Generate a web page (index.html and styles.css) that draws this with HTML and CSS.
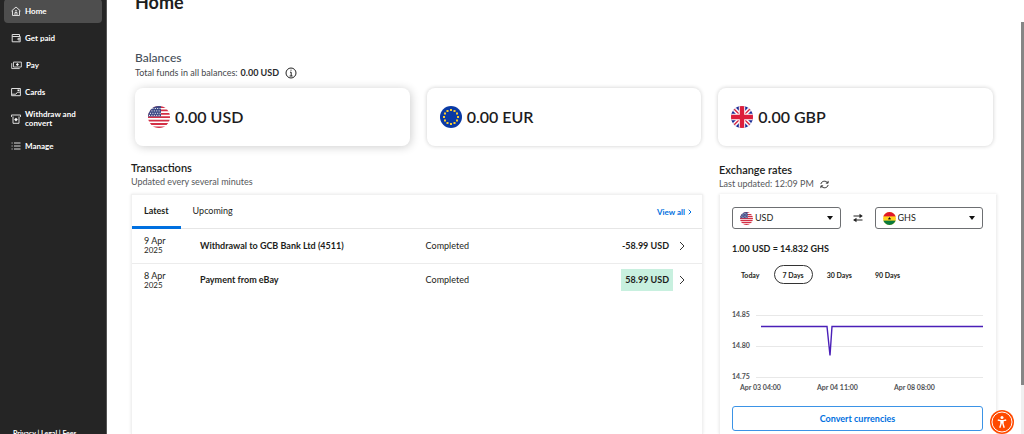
FILE: index.html
```html
<!DOCTYPE html>
<html lang="en">

<head>
	<meta charset="UTF-8">
	<meta name="viewport" content="width=device-width, initial-scale=1.0">
	<title>Home</title>
	<link rel="stylesheet" href="styles.css">
</head>

<body>
	<!-- shared flag drawings -->
	<svg class="defs" width="0" height="0" aria-hidden="true">
		<defs>
			<clipPath id="round"><circle cx="11" cy="11" r="11"/></clipPath>
			<symbol id="flag-us" viewBox="0 0 22 22">
				<g clip-path="url(#round)">
					<rect width="22" height="22" fill="#fff"/>
					<path d="M0 1h22M0 4.4h22M0 7.8h22M0 11.2h22M0 14.6h22M0 18h22M0 21.4h22" stroke="#d32f45" stroke-width="1.8"/>
					<rect width="13" height="10.5" fill="#3d4a86"/>
					<path d="M2 2.5h11M1 4.9h12M2 7.3h11M1 9.4h12" stroke="#fff" stroke-width="1" stroke-dasharray="1 1.4"/>
				</g>
			</symbol>
			<symbol id="flag-eu" viewBox="0 0 22 22">
				<circle cx="11" cy="11" r="11" fill="#0a3aa5"/>
				<g fill="#f7cc2e">
					<rect x="10" y="3" width="2" height="2"/><rect x="13.5" y="4" width="2" height="2"/>
					<rect x="16" y="6.5" width="2" height="2"/><rect x="17" y="10" width="2" height="2"/>
					<rect x="16" y="13.5" width="2" height="2"/><rect x="13.5" y="16" width="2" height="2"/>
					<rect x="10" y="17" width="2" height="2"/><rect x="6.5" y="16" width="2" height="2"/>
					<rect x="4" y="13.5" width="2" height="2"/><rect x="3" y="10" width="2" height="2"/>
					<rect x="4" y="6.5" width="2" height="2"/><rect x="6.5" y="4" width="2" height="2"/>
				</g>
			</symbol>
			<symbol id="flag-gb" viewBox="0 0 22 22">
				<g clip-path="url(#round)">
					<rect width="22" height="22" fill="#1a2a94"/>
					<path d="M0 0l22 22M22 0L0 22" stroke="#fff" stroke-width="4.4"/>
					<path d="M0 0l22 22M22 0L0 22" stroke="#d8203c" stroke-width="1.4"/>
					<path d="M11 0v22M0 11h22" stroke="#fff" stroke-width="6.4"/>
					<path d="M11 0v22M0 11h22" stroke="#dc1f3c" stroke-width="4.4"/>
				</g>
			</symbol>
			<symbol id="flag-gh" viewBox="0 0 22 22">
				<g clip-path="url(#round)">
					<rect width="22" height="22" fill="#ffd21f"/>
					<rect width="22" height="7.4" fill="#e0162b"/>
					<rect y="14.6" width="22" height="7.4" fill="#0a7a3c"/>
					<path d="M11 8.200l.8 1.900h2l-1.600 1.300.6 2.100-1.800-1.200-1.800 1.200.6-2.100-1.600-1.300h2z" fill="#111"/>
				</g>
			</symbol>
		</defs>
	</svg>

	<div class="app">
		<aside class="sidebar">
			<nav class="menu">
				<a class="menu-item active" href="#">
					<svg class="icon" viewBox="0 0 10 10"><path d="M.5 5L5 1l4.500 4M1.500 4.500v5h7v-5M4 9.500V6.500h2v3M4 4.800h2"/></svg>
					<span>Home</span>
				</a>
				<a class="menu-item" href="#">
					<svg class="icon" viewBox="0 0 10 10"><path d="M8.500 3.500V1.500H1.200v7.300h8V3.500H1.200M9 5.300H7v1.600h2"/></svg>
					<span>Get paid</span>
				</a>
				<a class="menu-item" href="#">
					<svg class="icon wide" viewBox="0 0 12 10"><path d="M2.700 1.800h8.600v5.400H2.700zM.8 3v5.900h8.700"/><path class="solid" d="M7 2.800L8.700 4.500 7 6.200 5.300 4.500z"/></svg>
					<span>Pay</span>
				</a>
				<a class="menu-item" href="#">
					<svg class="icon" viewBox="0 0 10 10"><path d="M.6 1.500h8.800v7.200H.6zM.8 7.200h4l1.700-2h2.900"/><path class="solid" d="M6.500 2.500h2v1.500h-2z"/></svg>
					<span>Cards</span>
				</a>
				<a class="menu-item" href="#">
					<svg class="icon" viewBox="0 0 10 10"><path d="M.4 3V1h9.200v2M2 2.500v6.800h6V2.500"/><path class="solid" d="M5 3.800L6.800 5.600 5 7.400 3.200 5.600z"/></svg>
					<span>Withdraw and convert</span>
				</a>
				<a class="menu-item" href="#">
					<svg class="icon" viewBox="0 0 10 10"><path d="M.6 2h1M3 2h6.500M.6 5h1M3 5h6.500M.6 8h1M3 8h6.500"/></svg>
					<span>Manage</span>
				</a>
			</nav>
			<div class="legal"><a href="#">Privacy</a> | <a href="#">Legal</a> | <a href="#">Fees</a></div>
		</aside>

		<main class="content">
			<h1 class="page-title">Home</h1>

			<section class="balances">
				<h2 class="balances-title">Balances</h2>
				<p class="total">Total funds in all balances: <b>0.00 USD</b>
					<svg class="info" viewBox="0 0 12 12"><circle cx="6" cy="6" r="5"/><path d="M5 5.200h1.200V9M4.600 9h3M5.500 3.200h1"/></svg>
				</p>
				<div class="cards">
					<div class="card selected"><svg class="flag"><use href="#flag-us"/></svg>0.00 USD</div>
					<div class="card"><svg class="flag"><use href="#flag-eu"/></svg>0.00 EUR</div>
					<div class="card"><svg class="flag"><use href="#flag-gb"/></svg>0.00 GBP</div>
				</div>
			</section>

			<div class="columns">
				<section class="transactions">
					<h2 class="section-title">Transactions</h2>
					<p class="note">Updated every several minutes</p>
					<div class="panel">
						<div class="tabs">
							<button class="tab current" type="button">Latest</button>
							<button class="tab" type="button">Upcoming</button>
							<a class="view-all" href="#">View all <svg viewBox="0 0 4 6"><path d="M.7.7L3 3 .7 5.300"/></svg></a>
						</div>
						<table class="list">
							<tr>
								<td class="date">9 Apr<small>2025</small></td>
								<td class="desc">Withdrawal to GCB Bank Ltd (4511)</td>
								<td class="status">Completed</td>
								<td class="amount"><span>-58.99 USD</span></td>
								<td class="more"><svg viewBox="0 0 6 10"><path d="M1 1l4 4-4 4"/></svg></td>
							</tr>
							<tr>
								<td class="date">8 Apr<small>2025</small></td>
								<td class="desc">Payment from eBay</td>
								<td class="status">Completed</td>
								<td class="amount"><span class="income">58.99 USD</span></td>
								<td class="more"><svg viewBox="0 0 6 10"><path d="M1 1l4 4-4 4"/></svg></td>
							</tr>
						</table>
					</div>
				</section>

				<section class="rates">
					<h2 class="section-title">Exchange rates</h2>
					<p class="note">Last updated: 12:09 PM
						<svg class="refresh" viewBox="0 0 10 10"><path d="M1 4.500C1.500 1 6.500.2 8.500 3.200M9 1v2.500H6.500M9 5.500C8.500 9 3.500 9.800 1.500 6.800M1 9V6.500h2.500"/></svg>
					</p>
					<div class="panel rates-panel">
						<div class="pair">
							<label class="currency">
								<svg class="flag"><use href="#flag-us"/></svg>
								<select aria-label="From"><option>USD</option></select>
								<svg class="caret" viewBox="0 0 6 4"><path d="M0 0h6L3 4z"/></svg>
							</label>
							<svg class="swap" viewBox="0 0 10 10"><path d="M.5 3h7.500M.8 7H9.500"/><path class="solid" d="M6.500.7L9.800 3 6.500 5.300zM3.500 4.700L.2 7l3.300 2.300z"/></svg>
							<label class="currency">
								<svg class="flag"><use href="#flag-gh"/></svg>
								<select aria-label="To"><option>GHS</option></select>
								<svg class="caret" viewBox="0 0 6 4"><path d="M0 0h6L3 4z"/></svg>
							</label>
						</div>
						<p class="rate">1.00 USD = 14.832 GHS</p>
						<div class="periods">
							<button class="period" type="button">Today</button>
							<button class="period chosen" type="button">7 Days</button>
							<button class="period" type="button">30 Days</button>
							<button class="period" type="button">90 Days</button>
						</div>
						<svg class="chart" viewBox="0 0 251 84">
							<path class="grid" d="M24 5.500h227M24 36.500h227M24 67.500h227"/>
							<path class="line" d="M29 16.500h66l3 29 2-29h151"/>
							<text x="0" y="7">14.85</text>
							<text x="0" y="38">14.80</text>
							<text x="0" y="69">14.75</text>
							<text x="8" y="80">Apr 03 04:00</text>
							<text x="85" y="80">Apr 04 11:00</text>
							<text x="162" y="80">Apr 08 08:00</text>
						</svg>
						<button class="convert" type="button">Convert currencies</button>
					</div>
				</section>
			</div>
		</main>
	</div>

	<button class="access" type="button" aria-label="Accessibility">
		<svg viewBox="0 0 24 24"><circle class="ring" cx="12" cy="12" r="10"/><circle class="head" cx="12" cy="7.400" r="1.500"/><path d="M7.800 10l2.700.6h3l2.700-.6M12 10.500v3M11 10.700v3.300l-1.200 3.800M13 10.700v3.300l1.200 3.800"/></svg>
	</button>
	<div class="scroll"><div class="thumb"></div></div>
</body>

</html>
```
FILE: styles.css
```css
* {
	box-sizing: border-box;
}

body {
	margin: 0;
	height: 100vh;
	overflow: hidden;
	font-family: Lato, "Open Sans", sans-serif;
	font-size: 9px;
	line-height: 12px;
	color: #1d1e20;
	background: #fff;
}

h1,
h2,
p {
	margin: 0;
}

a {
	color: inherit;
	text-decoration: none;
}

button,
select {
	font: inherit;
	color: inherit;
	background: none;
	border: 0;
	padding: 0;
	cursor: pointer;
}

svg {
	display: block;
	flex: none;
}

.defs {
	position: absolute;
}

.app {
	display: flex;
	height: 100vh;
}

/* sidebar */
.sidebar {
	display: flex;
	flex-direction: column;
	justify-content: space-between;
	flex: none;
	width: 107px;
	padding: 0 4px;
	background: #252525;
	border-right: 1px solid #555;
	color: #fff;
	font-weight: 700;
}

.menu {
	display: flex;
	flex-direction: column;
	gap: 3px;
	margin-top: -1px;
}

.menu-item {
	display: flex;
	align-items: center;
	gap: 4px;
	height: 24px;
	padding: 0 7px;
	border-radius: 4px;
	font-size: 8px;
	line-height: 9px;
}

.menu-item.active {
	background: #4e4e4e;
}

.icon {
	width: 10px;
	height: 10px;
	fill: none;
	stroke: #ddd;
	stroke-width: 1;
}

.icon.wide {
	width: 11px;
}

.solid {
	fill: #fff;
	stroke: none;
}

.legal {
	margin-bottom: -3px;
	padding-left: 9px;
	font-size: 7px;
	line-height: 8px;
}

/* content */
.content {
	display: flex;
	flex-direction: column;
	flex: 1;
	min-width: 0;
	height: 100vh;
	padding: 0 27px 0 24px;
	overflow: hidden;
}

.page-title {
	flex: none;
	margin-top: -10px;
	padding-left: 4px;
	font-size: 18px;
	line-height: 24px;
}

.balances {
	padding: 37px 4px 0;
}

.balances-title {
	font-size: 12px;
	line-height: 14px;
	font-weight: 500;
	color: #454e59;
}

.total {
	display: flex;
	align-items: center;
	gap: 3px;
	height: 16px;
	color: #45474a;
}

.total b {
	color: #2a2b2d;
}

.info {
	width: 12px;
	height: 12px;
	margin-left: 3px;
	fill: none;
	stroke: #222;
}

.cards {
	display: grid;
	grid-template-columns: repeat(3, 1fr);
	gap: 17px;
	margin-top: 7px;
}

.card {
	display: flex;
	align-items: center;
	gap: 5px;
	height: 58px;
	padding: 0 13px;
	border-radius: 8px;
	box-shadow: 0 0 4px rgba(0, 0, 0, 0.2);
	font-size: 16px;
	line-height: 22px;
	font-weight: 600;
	color: #1c1c1e;
}

.card.selected {
	box-shadow: 1px 1px 10px rgba(0, 0, 0, 0.2);
}

.flag {
	width: 22px;
	height: 22px;
}

.columns {
	display: grid;
	grid-template-columns: 572fr 278fr;
	gap: 16px;
	flex: 1;
	padding-top: 15px;
}

.transactions,
.rates {
	display: flex;
	flex-direction: column;
}

.rates {
	padding-top: 2px;
}

.section-title {
	font-size: 11px;
	line-height: 14px;
	font-weight: 600;
}

.note {
	display: flex;
	align-items: center;
	gap: 6px;
	height: 14px;
	color: #56585b;
}

.refresh {
	width: 9px;
	height: 9px;
	fill: none;
	stroke: #222;
}

.panel {
	flex: 1;
	margin-top: 5px;
	border: 1px solid #f1f1f1;
	border-bottom: 0;
	box-shadow: 0 0 3px rgba(0, 0, 0, 0.1);
}

/* transactions */
.tabs {
	display: flex;
	height: 34px;
	border-bottom: 1px solid #e6e6e6;
}

.tab {
	height: 34px;
	padding: 0 12px;
	border-bottom: 3px solid transparent;
}

.tab.current {
	border-color: #0070e0;
	font-weight: 700;
}

.view-all {
	display: flex;
	align-items: center;
	gap: 3px;
	margin-left: auto;
	padding-right: 10px;
	font-size: 8px;
	font-weight: 700;
	color: #0070e0;
}

.view-all svg {
	width: 4px;
	height: 6px;
	fill: none;
	stroke: #0070e0;
}

.list {
	width: 100%;
	table-layout: fixed;
	border-collapse: collapse;
}

.list tr {
	height: 34px;
}

.list tr + tr {
	border-top: 1px solid #ececec;
}

.list td {
	padding: 0;
}

.list .date {
	width: 68px;
	padding-left: 12px;
	line-height: 10px;
}

.date small {
	display: block;
	font-size: 8px;
	line-height: 9px;
}

.desc {
	font-weight: 700;
}

.status {
	width: 22%;
}

.amount {
	width: 122px;
	text-align: right;
	font-weight: 700;
}

.amount span {
	display: inline-block;
	padding: 5px 4px;
}

.amount .income {
	background: #c8f0df;
}

.more {
	width: 29px;
}

.more svg {
	width: 6px;
	height: 10px;
	margin-left: 6px;
	fill: none;
	stroke: #333;
}

/* exchange rates */
.rates-panel {
	margin-top: 3px;
	padding: 12px 13px 0 12px;
	border-top-color: transparent;
}

.pair {
	display: flex;
	align-items: center;
	justify-content: space-between;
	gap: 12px;
}

.currency {
	display: flex;
	align-items: center;
	flex: 1;
	gap: 2px;
	height: 22px;
	padding: 0 7px;
	border: 1px solid #6d6f72;
	border-radius: 3px;
}

.currency .flag {
	width: 13px;
	height: 13px;
}

.currency select {
	flex: 1;
	min-width: 0;
	appearance: none;
}

.caret {
	width: 6px;
	height: 4px;
	fill: #111;
}

.swap {
	width: 10px;
	height: 10px;
	fill: none;
	stroke: #222;
}

.swap .solid {
	fill: #222;
}

.rate {
	margin-top: 14px;
	font-weight: 700;
}

.periods {
	display: flex;
	gap: 5px;
	margin-top: 10px;
}

.period {
	height: 19px;
	padding: 0 8px;
	border: 1px solid transparent;
	border-radius: 10px;
	font-size: 7px;
	font-weight: 700;
}

.period.chosen {
	border-color: #333;
}

.chart {
	width: 100%;
	margin-top: 26px;
}

.chart text {
	font-size: 7px;
	font-weight: 700;
	fill: #505255;
}

.grid {
	stroke: #e8e8e8;
}

.line {
	fill: none;
	stroke: #4a1fb8;
	stroke-width: 1.4;
}

.convert {
	width: 100%;
	height: 25px;
	margin-top: 12px;
	border: 1px solid #3b93e6;
	border-radius: 3px;
	font-weight: 700;
	color: #0070e0;
}

/* floating things */
.access {
	position: fixed;
	right: 10px;
	bottom: 0;
	width: 24px;
	height: 24px;
	border-radius: 50%;
	background: #ff4a00;
}

.access svg {
	fill: none;
	stroke: #fff;
	stroke-width: 1.4;
}

.access .ring {
	stroke-width: 1;
}

.access .head {
	fill: #fff;
	stroke: none;
}

.scroll {
	position: fixed;
	top: 22px;
	right: 0;
	bottom: 0;
	width: 3px;
	background: #f0f0f0;
}

.thumb {
	height: 88%;
	background: #868686;
}
```
